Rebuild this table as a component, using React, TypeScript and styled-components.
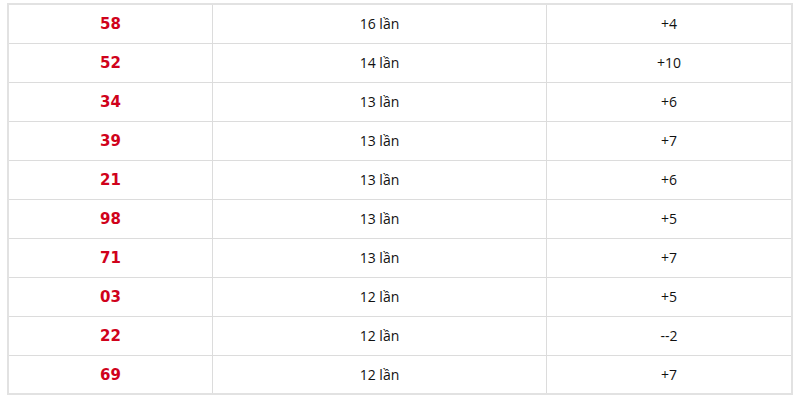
import styled, { createGlobalStyle } from "styled-components";

const GlobalStyle = createGlobalStyle`
  body {
    margin: 0;
    background: #fff;
  }
`;

const Wrapper = styled.div`
  padding: 3px 7px 0 7px;
`;

const Table = styled.table`
  width: 786px;
  border-collapse: collapse;
  border: 2px solid #e2e2e2;
  font-family: "Open Sans", "Liberation Sans", sans-serif;
`;

const Row = styled.tr`
  height: 39px;
`;

const Cell = styled.td<{ $w?: number }>`
  width: ${(p) => (p.$w ? `${p.$w}px` : "auto")};
  border: 1px solid #dcdcdc;
  text-align: center;
  vertical-align: middle;
  padding: 0;
  font-size: 14px;
  color: #111;
`;

const Number = styled.span`
  font-family: "DejaVu Sans", Tahoma, sans-serif;
  font-weight: bold;
  font-size: 15px;
  color: #d0021b;
`;

const rows = [
  ["58", "16 lần", "+4"],
  ["52", "14 lần", "+10"],
  ["34", "13 lần", "+6"],
  ["39", "13 lần", "+7"],
  ["21", "13 lần", "+6"],
  ["98", "13 lần", "+5"],
  ["71", "13 lần", "+7"],
  ["03", "12 lần", "+5"],
  ["22", "12 lần", "--2"],
  ["69", "12 lần", "+7"],
];

export default function App() {
  return (
    <>
      <GlobalStyle />
      <Wrapper>
        <Table>
          <tbody>
            {rows.map(([num, times, diff]) => (
              <Row key={num}>
                <Cell $w={203}>
                  <Number>{num}</Number>
                </Cell>
                <Cell $w={333}>{times}</Cell>
                <Cell>{diff}</Cell>
              </Row>
            ))}
          </tbody>
        </Table>
      </Wrapper>
    </>
  );
}
